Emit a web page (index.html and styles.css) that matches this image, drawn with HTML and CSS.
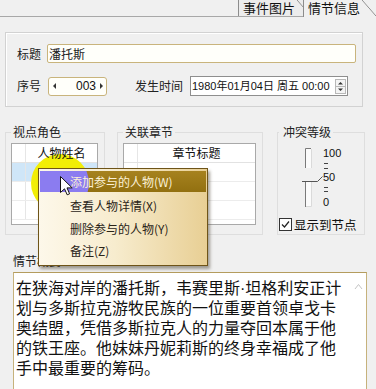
FILE: index.html
```html
<!DOCTYPE html>
<html>
<head>
<meta charset="utf-8">
<link rel="stylesheet" href="styles.css">
</head>
<body>
<div class="tabs">
  <div class="tab">事件图片</div>
  <div class="tab active">情节信息</div>
</div>

<div class="group basic">
  <div class="row">
    <span class="lbl">标题</span>
    <div class="field title">潘托斯</div>
  </div>
  <div class="row row2">
    <span class="lbl">序号</span>
    <div class="field spin"><span class="tri-l"></span><span class="num">003</span><span class="tri-r"></span></div>
    <span class="lbl time">发生时间</span>
    <div class="field date"><span class="dtext">1980年01月04日 周五 00:00</span>
      <svg class="updown" width="11" height="15" viewBox="0 0 11 15"><rect x="0.5" y="0.5" width="10" height="14" fill="#f4f4f4" stroke="#b8b8b8"/><line x1="1" y1="7.5" x2="10" y2="7.5" stroke="#b8b8b8"/><path d="M3 5.5 L5.5 3 L8 5.5 Z" fill="#333"/><path d="M3 9.5 L8 9.5 L5.5 12 Z" fill="#333"/></svg>
    </div>
  </div>
</div>

<div class="groups">
  <fieldset class="box role">
    <legend>视点角色</legend>
    <div class="list">
      <div class="lrow head"><div class="c0"></div><div class="c1">人物姓名</div></div>
      <div class="lrow sel"><div class="c0"></div><div class="c1"></div></div>
      <div class="lrow"><div class="c0"></div><div class="c1"></div></div>
      <div class="lrow"><div class="c0"></div><div class="c1"></div></div>
    </div>
  </fieldset>
  <fieldset class="box chap">
    <legend>关联章节</legend>
    <div class="list wide">
      <div class="lrow head"><div class="c0"></div><div class="c1">章节标题</div></div>
      <div class="lrow"><div class="c0"></div><div class="c1"></div></div>
      <div class="lrow"><div class="c0"></div><div class="c1"></div></div>
      <div class="lrow"><div class="c0"></div><div class="c1"></div></div>
    </div>
  </fieldset>
  <fieldset class="box level">
    <legend>冲突等级</legend>
    <div class="slider">
      <svg class="track" width="23" height="64" viewBox="0 0 23 64">
        <rect x="5.5" y="2.5" width="6" height="58" fill="#fbfbfb"/>
        <path d="M5.5 61 L5.5 2.5 L11 2.5" fill="none" stroke="#7a7a7a"/>
        <path d="M11.5 3 L11.5 60.5 L6 60.5" fill="none" stroke="#dadada"/>
        <rect x="2" y="22" width="16" height="13" fill="#f0f0f0"/>
        <path d="M2 35.5 L17.5 35.5 L22.5 30.5" fill="none" stroke="#555"/>
      </svg>
      <div class="scale">
        <div class="n n100">100</div>
        <div class="tk t1"></div>
        <div class="tk t2"></div>
        <div class="n n50">50</div>
        <div class="tk t3"></div>
        <div class="tk t4"></div>
        <div class="n n0">0</div>
      </div>
    </div>
    <div class="check">
      <svg class="cb" width="13" height="13" viewBox="0 0 13 13"><rect x="0.5" y="0.5" width="12" height="12" fill="#fff" stroke="#333"/><path d="M3 6.5 L5.5 9 L10 3.5" fill="none" stroke="#222" stroke-width="1.2"/></svg>
      <span>显示到节点</span>
    </div>
  </fieldset>
</div>

<div class="sumlbl">情节概要</div>
<div class="memo">
  <div class="memo-text">
    <div class="ml">在狭海对岸的潘托斯，韦赛里斯<span class="dot">·</span>坦格利安正计</div>
    <div class="ml">划与多斯拉克游牧民族的一位重要首领卓戈卡</div>
    <div class="ml">奥结盟，凭借多斯拉克人的力量夺回本属于他</div>
    <div class="ml">的铁王座。他妹妹丹妮莉斯的终身幸福成了他</div>
    <div class="ml">手中最重要的筹码。</div>
  </div>
  <div class="vscroll">
    <svg width="9" height="7" viewBox="0 0 9 7"><path d="M1 6 L4.5 1.5 L8 6" fill="none" stroke="#c4c4c4"/></svg>
  </div>
</div>

<div class="halo"></div>
<div class="menu">
  <div class="mi active"><span class="purple"></span><span class="mt">添加参与的人物(W)</span></div>
  <div class="mi">查看人物详情(X)</div>
  <div class="mi">删除参与的人物(Y)</div>
  <div class="mi">备注(Z)</div>
</div>
<svg class="cursor" width="14" height="20" viewBox="0 0 14 20"><path d="M0.5 0.5 L0.5 16.5 L4.5 12.8 L7.2 18.8 L9.6 17.8 L7 11.9 L12.2 11.9 Z" fill="#fff" stroke="#111" stroke-linejoin="round"/></svg>
</body>
</html>
```

FILE: styles.css
```css
body {
  margin: 0;
  width: 376px;
  height: 389px;
  overflow: hidden;
  position: relative;
  background: #f0f0f0;
  font-family: "Noto Sans CJK SC", sans-serif;
  font-size: 12px;
  line-height: 16px;
  color: #1c1c1c;
}

/* tabs */
.tabs {
  display: flex;
  justify-content: flex-end;
  align-items: flex-end;
  height: 17px;
  box-sizing: border-box;
  border-bottom: 1px solid #a8a8a8;
}
.tab {
  position: relative;
  height: 16px;
  padding: 0 16px 0 4px;
  border-left: 1px solid #8c8c8c;
  font-size: 13px;
  line-height: 16px;
  background: #ececec;
  color: #111;
}
.tab::after {
  content: "";
  position: absolute;
  right: 0;
  top: 0;
  width: 14px;
  height: 16px;
  background: linear-gradient(to top right, transparent calc(50% - 0.7px), #8c8c8c 50%, transparent calc(50% + 0.7px));
}
.tab.active {
  margin-left: -8px;
  height: 17px;
  margin-bottom: -1px;
  background: #f0f0f0;
}

/* basic group */
.basic {
  margin: 15px 0 0 5px;
  width: 358px;
  height: 75px;
  box-sizing: border-box;
  border: 1px solid #d2d2d2;
  box-shadow: inset 1px 1px 0 #fff;
  padding: 11px 0 0 11px;
}
.row {
  display: flex;
  align-items: center;
  height: 19px;
}
.row2 {
  margin-top: 13px;
  height: 20px;
}
.lbl {
  width: 25px;
  margin-right: 5px;
  white-space: nowrap;
  color: #222;
}
.field {
  box-sizing: border-box;
  background: #fffffa;
  border: 1px solid #c9b47c;
  border-radius: 2px;
}
.title {
  width: 309px;
  height: 19px;
  padding-left: 1px;
  line-height: 17px;
}
.spin {
  margin-left: 1px;
  width: 59px;
  height: 19px;
  display: flex;
  align-items: center;
  border-radius: 3px;
  padding: 0 3px 0 4px;
  font-family: "Liberation Sans", sans-serif;
  font-size: 12px;
}
.tri-l, .tri-r {
  width: 0;
  height: 0;
  border-top: 3px solid transparent;
  border-bottom: 3px solid transparent;
}
.tri-l { border-right: 3px solid #333; }
.tri-r { border-left: 3px solid #333; }
.num {
  flex: 1;
  text-align: right;
  padding-right: 4px;
  color: #111;
}
.lbl.time {
  width: 48px;
  margin-left: 28px;
  margin-right: 7px;
}
.date {
  width: 158px;
  height: 20px;
  border: 1px solid #8e8e8e;
  border-radius: 0;
  background: #fff;
  display: flex;
  align-items: center;
  padding-left: 1px;
  white-space: nowrap;
  overflow: hidden;
}
.dtext {
  flex: 1;
  min-width: 0;
  font-family: "Liberation Sans", "Noto Sans CJK SC", sans-serif;
  font-size: 11px;
  color: #111;
}
.updown {
  flex: none;
  margin-right: 1px;
  display: block;
}

/* second row of groups */
.groups {
  display: flex;
  margin: 17px 0 0 5px;
}
.box {
  margin: 0;
  border: 1px solid #dedede;
  padding: 3px 5px 9px 5px;
  min-width: 0;
  box-sizing: border-box;
}
.box legend {
  padding: 0 2px;
  font-size: 12px;
  line-height: 16px;
  color: #222;
}
.role { width: 100px; }
.chap { width: 146px; margin-left: 12px; }
.level { width: 88px; margin-left: 14px; padding: 3px 2px 0 1px; }
.level legend { padding: 0 2px 0 4px; }

.list {
  width: 87px;
  height: 82px;
  box-sizing: border-box;
  border: 1px solid #a9a9a9;
  background: #fff;
  overflow: hidden;
}
.list.wide { width: 133px; }
.lrow {
  display: flex;
  height: 18px;
  border-bottom: 1px solid #ececec;
}
.lrow .c0 {
  width: 13px;
  border-right: 1px solid #e6e6e6;
}
.lrow .c1 {
  flex: 1;
  text-align: center;
  line-height: 18px;
  color: #111;
}
.lrow.head { border-bottom-color: #e2e2e2; }
.lrow.head .c1 { position: relative; z-index: 2; }
.lrow.sel { background: #cfe6f8; }

.slider {
  display: flex;
  align-items: flex-start;
  height: 73px;
  padding-left: 21px;
}
.track {
  display: block;
  margin-top: 3px;
}
.scale {
  margin-top: 4px;
  font-family: "Liberation Sans", sans-serif;
  font-size: 11px;
  color: #111;
}
.n { line-height: 12px; height: 12px; }
.tk { width: 4px; height: 1px; background: #444; margin-left: 1px; }
.t1 { margin-top: 4px; }
.t2 { margin-top: 4px; }
.n50 { margin-top: 1.5px; }
.t3 { margin-top: 4.5px; }
.t4 { margin-top: 3px; }
.n0 { margin-top: 4px; }
.check {
  margin-top: 2px;
  display: flex;
  align-items: center;
  height: 13px;
  white-space: nowrap;
}
.cb { display: block; margin-right: 2px; }
.check span { font-size: 12.5px; color: #111; }

/* summary */
.sumlbl {
  margin: 18px 0 0 13px;
  line-height: 16px;
  color: #222;
}
.memo {
  margin: 3px 0 0 13px;
  width: 354px;
  height: 118px;
  box-sizing: border-box;
  border: 1px solid #c6b27c;
  border-top-color: #b49c5e;
  background: #fff;
  display: flex;
}
.memo-text {
  flex: 1;
  padding: 5px 0 0 2px;
  font-size: 16px;
  color: #111;
}
.ml {
  height: 20px;
  line-height: 18px;
  white-space: nowrap;
}
.dot { font-family: "Liberation Sans", sans-serif; }
.vscroll {
  width: 16px;
  padding-top: 10px;
  display: flex;
  justify-content: center;
  align-items: flex-start;
}
.vscroll svg { display: block; }

/* overlays */
.halo {
  position: absolute;
  z-index: 1;
  left: 31px;
  top: 154px;
  width: 58px;
  height: 58px;
  border-radius: 50%;
  background: #f2ee06;
}
.menu {
  position: absolute;
  z-index: 3;
  left: 38px;
  top: 168px;
  width: 170px;
  height: 98px;
  box-sizing: border-box;
  border: 1px solid #6e5418;
  padding: 2px 1px;
  background: linear-gradient(to right, #fdf8ea, #f7ecce 45%, #e8cf94);
  box-shadow: 2px 3px 3px rgba(60, 50, 30, 0.45);
}
.mi {
  height: 22.5px;
  line-height: 22.5px;
  padding-left: 30px;
  color: #2a2418;
  white-space: nowrap;
}
.mi.active {
  position: relative;
  overflow: hidden;
  height: 21px;
  line-height: 21px;
  margin-bottom: 3px;
  background: linear-gradient(#a6821f, #927010);
  color: #fbf1d6;
}
.purple {
  position: absolute;
  left: -9px;
  top: -17px;
  width: 58px;
  height: 58px;
  border-radius: 50%;
  background: #8b7cf0;
}
.mt { position: relative; }
.cursor {
  position: absolute;
  z-index: 4;
  left: 60px;
  top: 176px;
}
```
